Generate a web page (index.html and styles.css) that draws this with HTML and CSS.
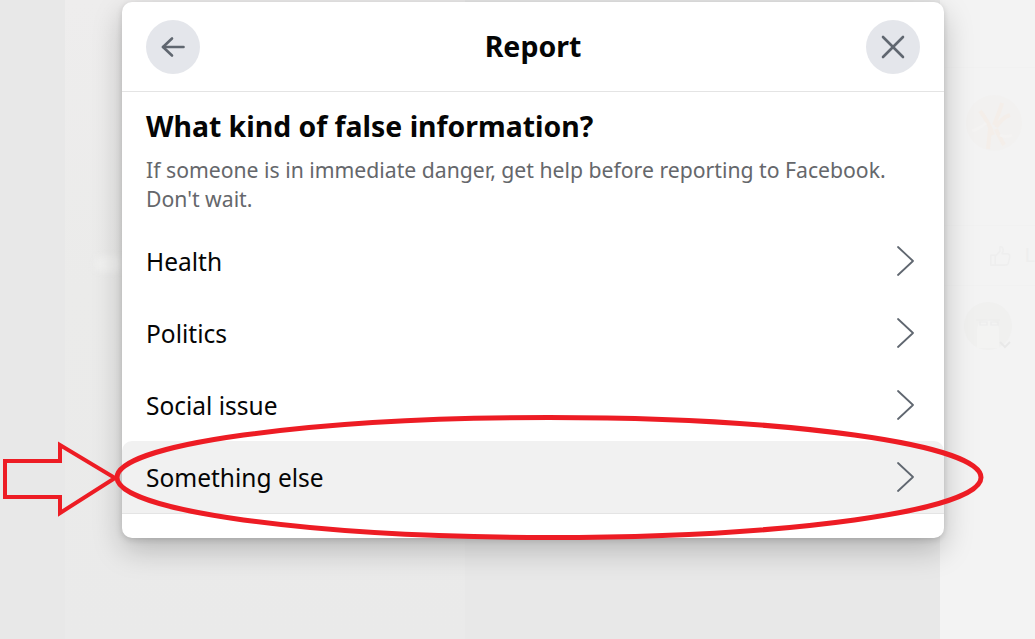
FILE: index.html
```html
<!DOCTYPE html>
<html lang="en">
<head>
    <meta charset="UTF-8">
    <meta name="viewport" content="width=device-width, initial-scale=1.0">
    <title>Report</title>
    <link rel="stylesheet" href="styles.css">
</head>
<body>
    <div class="page">
        <div class="feed">
            <div class="photo">
                <div class="photo-glow"></div>
            </div>
        </div>
        <div class="side">
            <div class="side-row side-row-top"></div>
            <div class="side-row side-row-post">
                <svg width="56" height="56" viewBox="0 0 56 56" fill="none">
                    <circle cx="28" cy="28" r="28" fill="#f2f1f0"/>
                    <path d="M14 16c5 6 9 12 13 24M36 8c-2 8-5 14-8 22M44 20c-6 2-10 6-14 12M22 54l2-20M38 50c-3-6-6-10-8-16" stroke="#f4eee9" stroke-width="4"/>
                    <path d="M6 36c6-2 10-4 14-8M46 40c-4 2-8 2-12 0" stroke="#f4f3f2" stroke-width="3"/>
                </svg>
            </div>
            <div class="side-row side-row-like">
                <svg width="27" height="28" viewBox="0 0 27 28" fill="none" stroke="#eeeeee" stroke-width="2" stroke-linejoin="round">
                    <path d="M1 13h6v13H1z"/>
                    <path d="M7 14l6-6V2c3-1 5 2 4 6l-1 3h7c2 0 3 2 3 4l-2 9c-1 2-2 2-4 2H7"/>
                </svg>
                <span class="like-label">L</span>
            </div>
            <div class="side-row side-row-last">
                <svg width="48" height="48" viewBox="0 0 48 48" fill="none">
                    <circle cx="24" cy="24" r="24" fill="#f0f0ef"/>
                    <path d="M13 46V28c0-14 22-14 22 0v18z" fill="#f3f3f2"/>
                    <path d="M12 18h24M16 20h7v3h-7zM27 20h7v3h-7z" stroke="#ecebeb" stroke-width="1.2"/>
                    <path d="M36 40l5 5 5-5" stroke="#e8e8e8" stroke-width="2"/>
                </svg>
            </div>
        </div>
    </div>

    <div class="modal">
        <div class="modal-header">
            <button class="round-btn">
                <svg width="26" height="26" viewBox="0 0 26 26" fill="none" stroke="#606770" stroke-width="2.6" stroke-linecap="round" stroke-linejoin="round">
                    <path d="M23.5 13H3"/>
                    <path d="M12 4.5L3 13l9 8.5"/>
                </svg>
            </button>
            <div class="modal-title">Report</div>
            <button class="round-btn">
                <svg width="26" height="26" viewBox="0 0 26 26" fill="none" stroke="#606770" stroke-width="2.6" stroke-linecap="round">
                    <path d="M3 3l20 20"/>
                    <path d="M23 3L3 23"/>
                </svg>
            </button>
        </div>

        <div class="modal-body">
            <div class="question">What kind of false information?</div>
            <div class="hint">If someone is in immediate danger, get help before reporting to Facebook. Don't wait.</div>
        </div>

        <div class="options">
            <div class="option">
                <span>Health</span>
                <svg class="chevron" width="18" height="30" viewBox="0 0 18 30" fill="none" stroke="#606770" stroke-width="1.8" stroke-linecap="round" stroke-linejoin="round"><path d="M2 1l15 14L2 29"/></svg>
            </div>
            <div class="option">
                <span>Politics</span>
                <svg class="chevron" width="18" height="30" viewBox="0 0 18 30" fill="none" stroke="#606770" stroke-width="1.8" stroke-linecap="round" stroke-linejoin="round"><path d="M2 1l15 14L2 29"/></svg>
            </div>
            <div class="option">
                <span>Social issue</span>
                <svg class="chevron" width="18" height="30" viewBox="0 0 18 30" fill="none" stroke="#606770" stroke-width="1.8" stroke-linecap="round" stroke-linejoin="round"><path d="M2 1l15 14L2 29"/></svg>
            </div>
            <div class="option hovered">
                <span>Something else</span>
                <svg class="chevron" width="18" height="30" viewBox="0 0 18 30" fill="none" stroke="#606770" stroke-width="1.8" stroke-linecap="round" stroke-linejoin="round"><path d="M2 1l15 14L2 29"/></svg>
            </div>
        </div>
    </div>

    <!-- red markup drawn on top of the screenshot -->
    <svg class="markup" width="1035" height="639" viewBox="0 0 1035 639" fill="none" stroke="#ed1c24" stroke-width="5">
        <ellipse cx="549" cy="477.5" rx="432" ry="60"/>
        <path stroke-width="4" d="M5 461H60V445L115 478L60 513V497H5Z"/>
    </svg>
</body>
</html>
```

FILE: styles.css
```css
html, body {
    margin: 0;
    height: 100%;
    overflow: hidden;
}
body {
    font-family: "Noto Sans", "Open Sans", sans-serif;
    background: #e9e9e9;
    position: relative;
}
.page {
    display: flex;
    height: 639px;
}
.feed {
    width: 940px;
    flex-shrink: 0;
    background: #e8e8e8;
    padding-left: 65px;
    box-sizing: border-box;
}
.photo {
    height: 100%;
    width: 400px;
    background: linear-gradient(180deg, #eeeded 0%, #ebebea 45%, #eaeaea 100%);
    position: relative;
}
.photo-glow {
    position: absolute;
    left: 30px;
    top: 256px;
    width: 28px;
    height: 16px;
    border-radius: 8px;
    background: #f1f1f0;
    filter: blur(3px);
}
.side {
    flex: 1;
    min-width: 0;
    overflow: hidden;
    background: #f3f3f3;
    display: flex;
    flex-direction: column;
}
.side-row {
    box-sizing: border-box;
    border-bottom: 1px solid #f1f1f1;
}
.side-row-top {
    height: 68px;
}
.side-row-post {
    height: 158px;
    padding: 27px 0 0 26px;
}
.side-row-like {
    height: 60px;
    padding: 16px 0 0 50px;
    display: flex;
    align-items: flex-start;
    gap: 14px;
}
.like-label {
    font-size: 20px;
    line-height: 26px;
    color: #eeeeee;
}
.side-row-last {
    border-bottom: none;
    padding: 16px 0 0 24px;
}
.modal {
    position: absolute;
    left: 122px;
    top: 2px;
    width: 822px;
    height: 536px;
    background: white;
    border-radius: 10px;
    box-shadow: 0 12px 30px rgba(0,0,0,0.22), 0 2px 6px rgba(0,0,0,0.14);
    display: flex;
    flex-direction: column;
}
.modal-header {
    height: 90px;
    flex-shrink: 0;
    box-sizing: border-box;
    border-bottom: 1px solid #e4e4e4;
    padding: 18px 24px 0;
    display: flex;
    justify-content: space-between;
    align-items: flex-start;
}
.round-btn {
    width: 54px;
    height: 54px;
    border: none;
    border-radius: 50%;
    background: #e4e6eb;
    padding: 0;
    display: flex;
    align-items: center;
    justify-content: center;
}
.modal-title {
    font-size: 28.5px;
    font-weight: 700;
    line-height: 53px;
    color: #050505;
}
.modal-body {
    padding: 14px 24px 0;
}
.question {
    font-size: 28.4px;
    font-weight: 700;
    line-height: 40px;
    color: #050505;
}
.hint {
    font-size: 21.2px;
    line-height: 29px;
    color: #65676b;
    margin-top: 9px;
}
.options {
    margin-top: 12px;
}
.option {
    height: 72px;
    box-sizing: border-box;
    padding: 0 30px 0 24px;
    display: flex;
    align-items: center;
    justify-content: space-between;
    font-size: 24.5px;
    color: #050505;
}
.option.hovered {
    height: 73px;
    background: #f1f1f1;
    border-radius: 10px 10px 0 0;
    border-bottom: 1px solid #e4e4e4;
}
.markup {
    position: absolute;
    left: 0;
    top: 0;
}
```
